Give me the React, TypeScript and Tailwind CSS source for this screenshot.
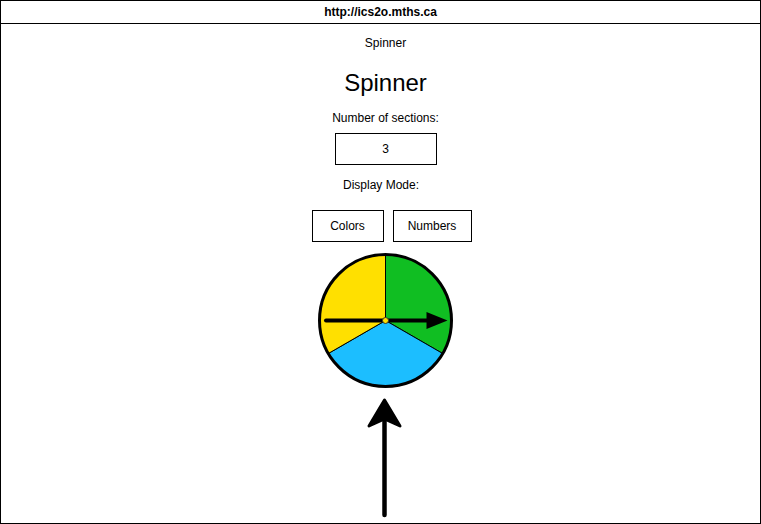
import React from "react";

function Wheel() {
  const cx = 70.5;
  const cy = 70.5;
  const r = 66;
  const top = [cx, cy - r];
  const p30 = [cx + r * Math.cos(Math.PI / 6), cy + r * Math.sin(Math.PI / 6)];
  const p150 = [cx - r * Math.cos(Math.PI / 6), cy + r * Math.sin(Math.PI / 6)];
  const seg = (a: number[], b: number[]) =>
    `M ${cx} ${cy} L ${a[0]} ${a[1]} A ${r} ${r} 0 0 1 ${b[0]} ${b[1]} Z`;
  return (
    <svg width="141" height="141" viewBox="0 0 141 141" className="block">
      <path d={seg(top, p30)} fill="#10be22" stroke="#000" strokeWidth="1" />
      <path d={seg(p30, p150)} fill="#1cbeff" stroke="#000" strokeWidth="1" />
      <path d={seg(p150, top)} fill="#ffe000" stroke="#000" strokeWidth="1" />
      <circle cx={cx} cy={cy} r={r} fill="none" stroke="#000" strokeWidth="3" />
      <line x1="11" y1={cy} x2="114" y2={cy} stroke="#000" strokeWidth="4" strokeLinecap="round" />
      <polygon points={`111.5,62 132.5,${cy} 111.5,79`} fill="#000" />
      <circle cx={cx} cy={cy} r="3" fill="#ffe000" stroke="#333" strokeWidth="1" />
    </svg>
  );
}

function UpArrow() {
  return (
    <svg width="41" height="132" viewBox="0 0 41 132" className="block">
      <line x1="19.5" y1="20" x2="19.5" y2="123" stroke="#000" strokeWidth="4.5" strokeLinecap="round" />
      <polygon
        points="19.5,8 35,34 19.5,27 4,34"
        fill="#000"
        stroke="#000"
        strokeWidth="3"
        strokeLinejoin="round"
      />
    </svg>
  );
}

export default function App() {
  return (
    <div
      className="w-[761px] h-[524px] border border-black overflow-hidden bg-white text-black"
      style={{ fontFamily: '"Liberation Sans", Arial, sans-serif' }}
    >
      <div className="h-[23px] border-b border-black flex items-center justify-center text-[12px] font-bold leading-[14px]">
        http://ics2o.mths.ca
      </div>
      <div className="flex flex-col items-center pl-[10px]">
        <div className="mt-[12px] text-[12px] leading-[14px]">Spinner</div>
        <div className="mt-[19px] text-[24px] leading-[28px]">Spinner</div>
        <div className="mt-[14px] text-[12px] leading-[14px]">Number of sections:</div>
        <div className="mt-[8px] w-[102px] h-[32px] border border-black flex items-center justify-center text-[12px]">
          3
        </div>
        <div className="mt-[13px] text-[12px] leading-[14px] mr-[9px]">Display Mode:</div>
        <div className="mt-[18px] flex gap-[9px] ml-[12px]">
          <div className="w-[72px] h-[32px] border border-black flex items-center justify-center text-[12px]">
            Colors
          </div>
          <div className="w-[79px] h-[32px] border border-black flex items-center justify-center text-[12px]">
            Numbers
          </div>
        </div>
        <div className="mt-[8px]">
          <Wheel />
        </div>
        <div className="mt-[1px]">
          <UpArrow />
        </div>
      </div>
    </div>
  );
}
